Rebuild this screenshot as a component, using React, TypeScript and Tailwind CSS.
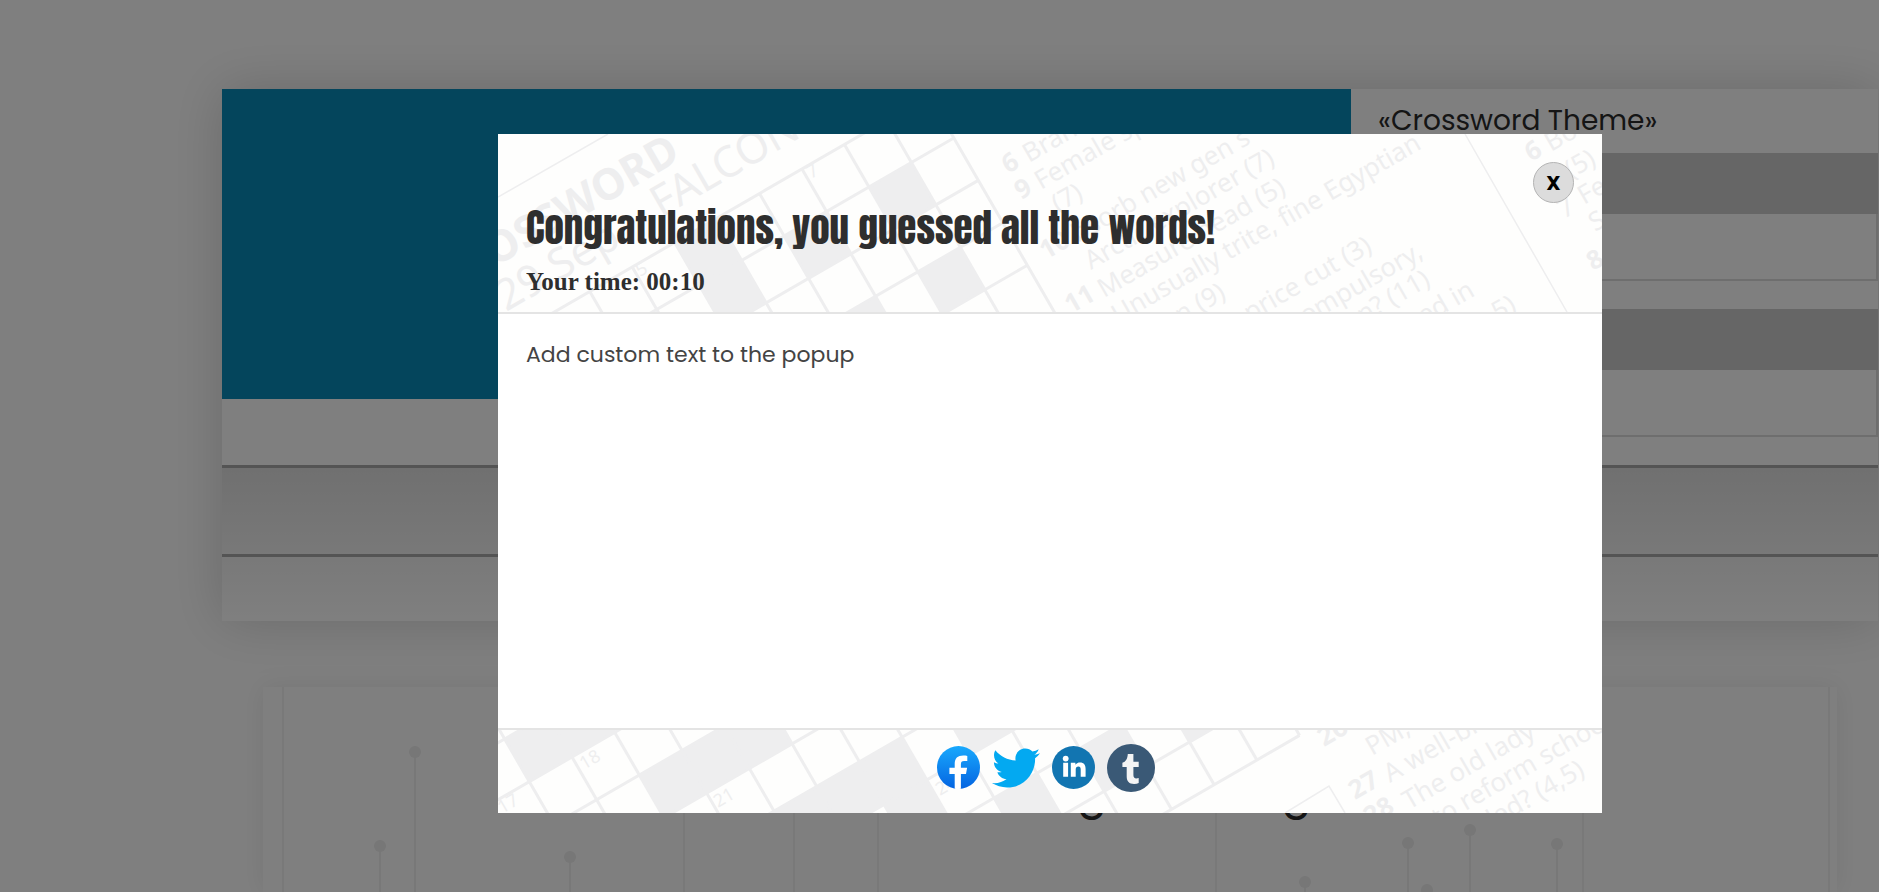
import { FaTwitter } from "react-icons/fa";

type Label = { x: number; y: number; text: string; kind?: "bold" | "tiny" | "title" | "titleBold" };
type Grid = { x: number; y: number; cell: number; lines: number[][]; filled: number[][] };

const ANGLE = -30;

const headerGrid: Grid = {
  x: 304,
  y: 35,
  cell: 49,
  lines: [
    [-8, 0, 3, 0], [-8, 1, 3, 1], [-8, 2, 3, 2], [-8, 3, 3, 3], [-8, 4, 3, 4], [1, -1, 3, -1],
    [-5, 0, -5, 6], [-4, 0, -4, 6], [-3, 0, -3, 6], [-2, 0, -2, 6], [-1, 0, -1, 6],
    [0, 0, 0, 6], [1, 0, 1, 6], [2, -1, 2, 6], [3, -1, 3, 8],
  ],
  filled: [[1, 1], [-3, 0], [-3, 1], [-1, 1], [1, 3], [-1, 3]],
};

const headerLabels: Label[] = [
  { x: -3, y: 133, text: "OSSWORD", kind: "titleBold" },
  { x: 8, y: 178, text: "29 Sep", kind: "title" },
  { x: 163, y: 84, text: "FALCON", kind: "title" },
  { x: 313, y: 45, text: "7", kind: "tiny" },
  { x: 142, y: 143, text: "5", kind: "tiny" },
  { x: 510, y: 40, text: "6", kind: "bold" },
  { x: 531, y: 29, text: "Brand" },
  { x: 523, y: 66, text: "9", kind: "bold" },
  { x: 543, y: 56, text: "Female sp" },
  { x: 560, y: 79, text: "(7)" },
  { x: 580, y: 109, text: "bsorb new gen s" },
  { x: 548, y: 126, text: "10", kind: "bold" },
  { x: 593, y: 136, text: "Arctic explorer (7)" },
  { x: 573, y: 180, text: "11", kind: "bold" },
  { x: 606, y: 164, text: "Measure head (5)" },
  { x: 620, y: 190, text: "Unusually trite, fine Egyptian" },
  { x: 683, y: 190, text: "n (9)" },
  { x: 752, y: 188, text: "price cut (3)" },
  { x: 808, y: 191, text: "ompulsory," },
  { x: 865, y: 190, text: "n? (11)" },
  { x: 926, y: 191, text: "ed in" },
  { x: 1000, y: 187, text: "5)" },
  { x: 1033, y: 28, text: "6", kind: "bold" },
  { x: 1053, y: 18, text: "Bo" },
  { x: 1073, y: 45, text: "(5)" },
  { x: 1066, y: 85, text: "7" },
  { x: 1086, y: 71, text: "Fe" },
  { x: 1097, y: 98, text: "S" },
  { x: 1095, y: 137, text: "8", kind: "bold" },
];

const footerGrid: Grid = {
  x: 74,
  y: 27,
  cell: 49.3,
  lines: [
    [-3, -1, 6, -1], [-3, 0, 8, 0], [-3, 1, 8, 1], [-3, 2, 9, 2], [-1, 3, 9, 3], [0, 4, 13, 4],
    [2, 5, 13, 5], [4, 6, 13, 6], [5, 7, 13, 7],
    [-1, -3, -1, 3], [0, -2, 0, 4], [1, -2, 1, 5], [2, -1, 2, 5], [3, 0, 3, 6], [4, 0, 4, 7],
    [5, 0, 5, 7], [6, 1, 6, 7], [7, 2, 7, 7], [8, 2, 8, 7], [9, 2, 9, 7], [10, 3, 10, 7],
    [11, 3, 11, 7], [12, 3, 12, 7], [13, 4, 13, 7],
  ],
  filled: [
    [-1, -1], [0, -1], [-1, 2], [0, 2], [1, 1], [2, 1], [3, 1], [3, 3], [4, 3], [5, 3], [5, 4],
    [7, 3], [7, 5], [9, 5], [11, 5],
  ],
};

const footerLabels: Label[] = [
  { x: 4, y: 84, text: "17", kind: "tiny" },
  { x: 86, y: 40, text: "18", kind: "tiny" },
  { x: 220, y: 78, text: "21", kind: "tiny" },
  { x: 442, y: 66, text: "24", kind: "tiny" },
  { x: 826, y: 17, text: "26", kind: "bold" },
  { x: 874, y: 26, text: "PM," },
  { x: 857, y: 70, text: "27", kind: "bold" },
  { x: 892, y: 53, text: "A well-bred" },
  { x: 872, y: 96, text: "28", kind: "bold" },
  { x: 911, y: 80, text: "The old lady" },
  { x: 940, y: 97, text: "to reform school" },
  { x: 987, y: 103, text: "ded? (4,5)" },
];

const labelStyle = {
  plain: "text-[26px] font-normal",
  bold: "text-[26px] font-bold",
  tiny: "text-[18px] font-normal",
  title: "text-[43px] font-normal",
  titleBold: "text-[43px] font-bold",
};

function CrosswordBackdrop({ height, grid, labels, rules }: { height: number; grid: Grid; labels: Label[]; rules: string }) {
  const { cell } = grid;
  return (
    <svg
      aria-hidden="true"
      viewBox={`0 0 1104 ${height}`}
      preserveAspectRatio="xMinYMin slice"
      className="absolute inset-0 h-full w-full font-['Noto_Sans',sans-serif]"
    >
      <g transform={`translate(${grid.x} ${grid.y}) rotate(${ANGLE})`} stroke="#eeeeef" strokeWidth="3">
        {grid.filled.map(([i, j]) => (
          <rect key={`${i},${j}`} x={i * cell} y={j * cell} width={cell} height={cell} fill="#eeeeef" stroke="none" />
        ))}
        {grid.lines.map(([a, b, c, d]) => (
          <line key={`${a},${b},${c},${d}`} x1={a * cell} y1={b * cell} x2={c * cell} y2={d * cell} />
        ))}
      </g>
      <path d={rules} fill="none" stroke="#eeeeef" strokeWidth="1.5" />
      {labels.map(({ x, y, text, kind }) => (
        <text key={`${x},${y}`} transform={`translate(${x} ${y}) rotate(${ANGLE})`} fill="#eeeeef" className={labelStyle[kind ?? "plain"]}>
          {text}
        </text>
      ))}
    </svg>
  );
}

const pins = [[152, 65], [117, 159], [307, 170], [1042, 195], [1145, 156], [1164, 203], [1207, 143], [1294, 157]];
const rails = [20, 421, 531, 615, 953, 1320, 1566];

function PinsBackdrop() {
  return (
    <svg aria-hidden="true" viewBox="0 0 1574 206" preserveAspectRatio="xMinYMin slice" className="absolute inset-0 h-full w-full">
      {rails.map((x) => (
        <line key={x} x1={x} x2={x} y1="0" y2="206" stroke="#f2f2f2" strokeWidth="2" />
      ))}
      {pins.map(([x, y]) => (
        <g key={x} fill="#eeeeee">
          <line x1={x} x2={x} y1={y} y2="206" stroke="#f0f0f0" strokeWidth="2" />
          <circle cx={x} cy={y} r="6" />
        </g>
      ))}
    </svg>
  );
}

function FacebookLogo() {
  return (
    <svg viewBox="0 0 43 43" className="size-[43px]" aria-hidden="true">
      <defs>
        <linearGradient id="fb" x1="0" y1="0" x2="0" y2="1">
          <stop offset="0" stopColor="#19a9fd" />
          <stop offset="1" stopColor="#0464e1" />
        </linearGradient>
      </defs>
      <circle cx="21.5" cy="21.5" r="21.5" fill="url(#fb)" />
      <path fill="#fff" d="M17.7 42.7V28h-5.3v-6.2h5.3v-3.6c0-5.8 2.8-8.7 8.6-8.7 1.5 0 3 .2 4 .4v5h-3.2c-2.5 0-3.2 1.2-3.2 3.3v3.6h6.2L29 28h-5.1v14.7a21.5 21.5 0 0 1-6.2 0z" />
    </svg>
  );
}

function LinkedInLogo() {
  return (
    <svg viewBox="0 0 43 43" className="size-[43px]" aria-hidden="true">
      <circle cx="21.5" cy="21.5" r="21.5" fill="#1275b1" />
      <circle cx="13.7" cy="12.6" r="2.9" fill="#fff" />
      <path fill="#fff" d="M11.2 16.8h4.9v14h-4.9zM18.8 16.8h4.6v1.9c.8-1.3 2.3-2.3 4.6-2.3 4.1 0 5.6 2.5 5.6 6.5v7.9h-4.9v-7.2c0-2-.6-3.2-2.3-3.2-1.8 0-2.7 1.2-2.7 3.2v7.2h-4.9z" />
    </svg>
  );
}

function TumblrLogo() {
  return (
    <svg viewBox="0 0 48 48" className="size-12" aria-hidden="true">
      <circle cx="24" cy="24" r="24" fill="#3a5976" />
      <path fill="#f4f4f4" d="M20.8 10h5.6v7.8h5.3v5.3h-5.3v8c0 2.4 1 3.4 2.9 3.4.9 0 1.7-.2 2.4-.5v5c-1.2.6-2.8.9-4.6.9-4.9 0-7.4-2.7-7.4-7.5v-9.3h-4.3v-4.3c3.4-1.1 5.1-3.9 5.4-8.8z" />
    </svg>
  );
}

function Clue({ label }: { label: string }) {
  return (
    <div className="pb-7 last:pb-0">
      <div className="h-[61px] bg-[#cccccc]" />
      <input aria-label={label} className="block h-[67px] w-full border-2 border-t-0 border-[#dcdcdc] bg-white px-4" />
    </div>
  );
}

export default function App() {
  return (
    <div className="min-h-screen overflow-hidden bg-white font-['Poppins','Inter',sans-serif]">
      <main className="flex h-screen flex-col pt-[89px] pr-px pl-[222px]">
        <section className="shrink-0 bg-white shadow-[0_0_50px_rgba(0,0,0,0.17)]">
          <div className="flex h-[376px]">
            <div className="h-[310px] flex-1 bg-[#088ab8]" />
            <div className="w-[527px]">
              <h1 className="flex h-16 items-center px-[27px] text-[28px] text-[#2b2b2b]">«Crossword Theme»</h1>
              <Clue label="Clue 1" />
              <Clue label="Clue 2" />
            </div>
          </div>
          <div className="h-[156px] bg-linear-to-b from-[#e0e0e0] to-white">
            <div className="h-[92px] border-y-3 border-[#a8a8a8]" />
          </div>
        </section>
        <section className="relative mx-[41px] mt-[66px] flex-1 bg-white pt-[82px] text-center shadow-[0_0_24px_rgba(0,0,0,0.08)]">
          <PinsBackdrop />
          <h2 className="relative text-[44px] leading-[48px] text-[#2b2b2b]">Crossword Plugin Settings</h2>
        </section>
      </main>

      <div className="fixed inset-0 flex items-start justify-center bg-black/50 pt-[134px] pr-px pl-[222px]">
        <div role="dialog" aria-modal="true" aria-labelledby="popup-title" className="flex w-2/3 flex-col bg-white">
          <header className="relative flex h-[180px] items-start justify-between overflow-hidden border-b-2 border-[#e4e4e4] bg-[#fefefd] px-7">
            <CrosswordBackdrop height={178} grid={headerGrid} labels={headerLabels} rules="M0 63L110 0M967 0L1069 178" />
            <div className="relative pt-[66px]">
              <h2 id="popup-title" className="font-['Anton','Roboto',sans-serif] text-[39px] leading-[56px] font-normal whitespace-nowrap text-[#2e2e2e]">
                Congratulations, you guessed all the words!
              </h2>
              <p className="mt-2 font-['Liberation_Serif',serif] text-[25px] leading-9 font-bold text-[#2e2e2e]">Your time: 00:10</p>
            </div>
            <button
              type="button"
              aria-label="Close"
              className="relative mt-7 flex size-[41px] items-center justify-center rounded-full border border-[#b4b4b4] bg-[#dcdcdc] text-xl font-bold text-black"
            >
              X
            </button>
          </header>
          <div className="h-[414px] px-7 pt-[25px] text-[22px] leading-8 text-[#444444]">Add custom text to the popup</div>
          <footer className="relative flex h-[85px] items-center justify-center overflow-hidden border-t-2 border-[#e4e4e4] bg-[#fefefd] pr-[7px] pb-2">
            <CrosswordBackdrop height={83} grid={footerGrid} labels={footerLabels} rules="M787 83L831 56L847 83" />
            <nav className="relative flex items-center gap-3" aria-label="Share">
              <a href="#facebook" aria-label="Facebook"><FacebookLogo /></a>
              <a href="#twitter" aria-label="Twitter"><FaTwitter className="size-12 text-[#03a9f1]" /></a>
              <a href="#linkedin" aria-label="LinkedIn"><LinkedInLogo /></a>
              <a href="#tumblr" aria-label="Tumblr"><TumblrLogo /></a>
            </nav>
          </footer>
        </div>
      </div>
    </div>
  );
}
